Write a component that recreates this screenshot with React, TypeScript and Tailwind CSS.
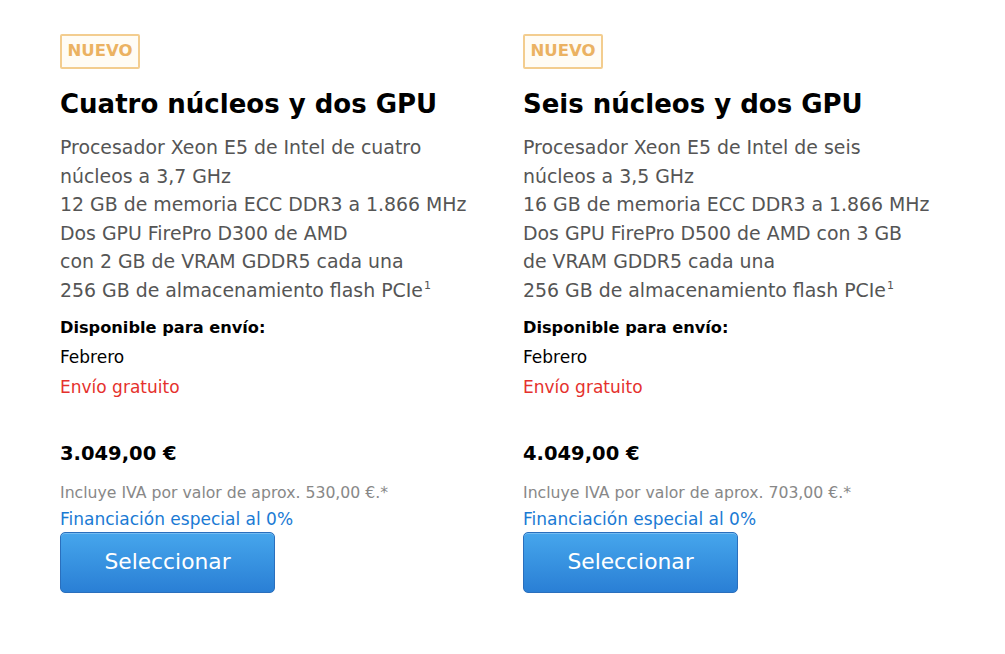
import React from "react";

type Product = {
  title: string;
  specs: React.ReactNode[];
  price: string;
  iva: string;
};

const Sup = () => <sup className="text-[11px] relative -top-[0.65em] ml-[1px]">1</sup>;

const products: Product[] = [
  {
    title: "Cuatro núcleos y dos GPU",
    specs: [
      "Procesador Xeon E5 de Intel de cuatro",
      "núcleos a 3,7 GHz",
      "12 GB de memoria ECC DDR3 a 1.866 MHz",
      "Dos GPU FirePro D300 de AMD",
      "con 2 GB de VRAM GDDR5 cada una",
      <>
        256 GB de almacenamiento flash PCIe<Sup />
      </>,
    ],
    price: "3.049,00 €",
    iva: "Incluye IVA por valor de aprox. 530,00 €.*",
  },
  {
    title: "Seis núcleos y dos GPU",
    specs: [
      "Procesador Xeon E5 de Intel de seis",
      "núcleos a 3,5 GHz",
      "16 GB de memoria ECC DDR3 a 1.866 MHz",
      "Dos GPU FirePro D500 de AMD con 3 GB",
      "de VRAM GDDR5 cada una",
      <>
        256 GB de almacenamiento flash PCIe<Sup />
      </>,
    ],
    price: "4.049,00 €",
    iva: "Incluye IVA por valor de aprox. 703,00 €.*",
  },
];

function Card({ p }: { p: Product }) {
  return (
    <div className="flex flex-col">
      <div className="flex">
        <span className="h-[35px] w-[80px] flex items-center justify-center border-2 border-[#f3cd8f] bg-[#fffcf5] rounded-[2px] text-[16.5px] font-bold text-[#ebb262]">
          NUEVO
        </span>
      </div>
      <h2 className="mt-[17px] text-[26px] leading-[36px] font-bold text-black">{p.title}</h2>
      <div className="mt-[11px] text-[18.9px] leading-[28.5px] text-[#555555]">
        {p.specs.map((s, i) => (
          <div key={i} className="whitespace-nowrap">
            {s}
          </div>
        ))}
      </div>
      <div className="mt-[9px] text-[16.2px] leading-[30px] font-bold text-black">Disponible para envío:</div>
      <div className="text-[17px] leading-[29.5px] text-black">Febrero</div>
      <div className="text-[17px] leading-[29.5px] text-[#e5312d]">Envío gratuito</div>
      <div className="mt-[37px] text-[19.5px] leading-[30px] font-bold text-black">{p.price}</div>
      <div className="mt-[13px] text-[15.7px] leading-[22px] text-[#888888]">{p.iva}</div>
      <div className="mt-[2px] text-[17px] leading-[26px] text-[#1a7ad4]">Financiación especial al 0%</div>
      <div className="flex">
        <button className="h-[61px] w-[215px] rounded-[5px] border border-[#2a6fbd] bg-gradient-to-b from-[#46a6ec] to-[#2a7fd5] text-white text-[21.8px] shadow-[inset_0_1px_0_rgba(255,255,255,0.25)]">
          Seleccionar
        </button>
      </div>
    </div>
  );
}

export default function App() {
  return (
    <div
      className="w-[1005px] h-[654px] bg-white pl-[60px] pt-[34px]"
      style={{ fontFamily: '"DejaVu Sans", "Liberation Sans", sans-serif' }}
    >
      <div className="grid grid-cols-[463px_463px]">
        {products.map((p, i) => (
          <Card key={i} p={p} />
        ))}
      </div>
    </div>
  );
}
